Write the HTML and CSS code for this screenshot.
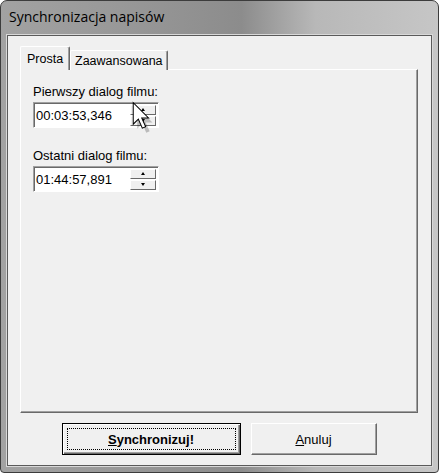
FILE: index.html
```html
<!DOCTYPE html>
<html lang="pl">
<head>
    <meta charset="UTF-8">
    <title>Synchronizacja napisów</title>
    <link rel="stylesheet" href="styles.css">
</head>
<body>
    <div class="window">
        <div class="titlebar">Synchronizacja napisów</div>
        <div class="client">
            <!-- Zakładki -->
            <div class="tabs">
                <div class="tab active">Prosta</div>
                <div class="tab">Zaawansowana</div>
            </div>
            <div class="panel">
                <label class="field-label">Pierwszy dialog filmu:</label>
                <div class="spin-field">
                    <span class="spin-value">00:03:53,346</span>
                    <div class="spin-buttons">
                        <div class="spin-btn"><span class="arrow-up"></span></div>
                        <div class="spin-btn"><span class="arrow-down"></span></div>
                    </div>
                </div>

                <label class="field-label second">Ostatni dialog filmu:</label>
                <div class="spin-field">
                    <span class="spin-value">01:44:57,891</span>
                    <div class="spin-buttons">
                        <div class="spin-btn"><span class="arrow-up"></span></div>
                        <div class="spin-btn"><span class="arrow-down"></span></div>
                    </div>
                </div>
            </div>
            <!-- Przyciski -->
            <div class="buttons">
                <button class="btn default"><span class="focus"><u>S</u>ynchronizuj!</span></button>
                <button class="btn cancel"><u>A</u>nuluj</button>
            </div>
        </div>
        <svg class="cursor" width="26" height="34" viewBox="0 0 22 30">
            <path d="M2.5 2.5 L2.5 21.5 L7 17 L10.5 25 L13.5 23.7 L10 16 L16 16 Z" fill="#000" opacity="0.22" transform="translate(2.5 3)"/>
            <path d="M1.5 1.5 L1.5 20.5 L6 16 L9.5 24 L12.5 22.7 L9 15 L15 15 Z" fill="#fff" stroke="#000" stroke-width="0.9"/>
        </svg>
    </div>
</body>
</html>
```

FILE: styles.css
```css
body {
    margin: 0;
    background: #fff;
    font-family: "Liberation Sans", Arial, sans-serif;
    font-size: 13px;
    color: #000;
}
.window {
    position: relative;
    width: 439px;
    height: 473px;
    box-sizing: border-box;
    border: 1px solid #3c3c3c;
    border-radius: 7px 7px 4px 4px;
    background: linear-gradient(to right, #a2a2a2, #979797 30%, #8c8c8c 55%, #b8b8b8 72%, #c6c6c6);
    display: flex;
    flex-direction: column;
    overflow: hidden;
}
.titlebar {
    height: 34px;
    box-sizing: border-box;
    padding: 6px 0 0 8px;
    font-family: "Open Sans", sans-serif;
    font-size: 14px;
    color: #000;
}
.client {
    flex: 1;
    margin: 0 6px 6px;
    border: 1px solid #5a5a5a;
    background: #f0f0f0;
    display: flex;
    flex-direction: column;
    padding: 10px 13px 10px 12px;
    box-shadow: 0 0 0 1px #d8d8d8;
}
.tabs {
    display: flex;
    align-items: flex-end;
    height: 24px;
    margin-bottom: -1px;
    position: relative;
    z-index: 1;
}
.tab {
    height: 20px;
    box-sizing: border-box;
    padding: 3px 4px 0;
    border-top: 1px solid #fff;
    border-left: 1px solid #fff;
    border-right: 1px solid #696969;
    box-shadow: inset -1px 0 0 #a0a0a0;
    background: #f0f0f0;
    border-radius: 2px 2px 0 0;
    font-size: 12.5px;
}
.tab.active {
    height: 24px;
    padding: 5px 6px 0 6px;
    width: 50px;
}
.panel {
    flex: 1;
    border-top: 1px solid #fff;
    border-left: 1px solid #fff;
    border-right: 1px solid #696969;
    border-bottom: 1px solid #696969;
    box-shadow: inset -1px -1px 0 #a0a0a0;
    padding: 14px 12px 0;
    display: flex;
    flex-direction: column;
    align-items: flex-start;
}
.field-label {
    height: 18px;
    line-height: 15px;
}
.field-label.second {
    margin-top: 20px;
}
.spin-field {
    width: 126px;
    height: 26px;
    box-sizing: border-box;
    background: #fff;
    border-top: 1px solid #a0a0a0;
    border-left: 1px solid #a0a0a0;
    border-right: 1px solid #fff;
    border-bottom: 1px solid #fff;
    box-shadow: inset 1px 1px 0 #696969;
    display: flex;
    align-items: center;
    padding: 2px;
}
.spin-value {
    flex: 1;
}
.spin-buttons {
    display: flex;
    flex-direction: column;
    gap: 1px;
    width: 26px;
    height: 21px;
}
.spin-btn {
    flex: 1;
    background: #f0f0f0;
    border-top: 1px solid #fff;
    border-left: 1px solid #fff;
    border-right: 1px solid #696969;
    border-bottom: 1px solid #696969;
    display: flex;
    align-items: center;
    justify-content: center;
}
.arrow-up, .arrow-down {
    width: 0;
    height: 0;
    border-left: 2.5px solid transparent;
    border-right: 2.5px solid transparent;
}
.arrow-up {
    border-bottom: 3px solid #000;
}
.arrow-down {
    border-top: 3px solid #000;
}
.buttons {
    display: flex;
    justify-content: center;
    gap: 10px;
    margin-top: 10px;
    height: 32px;
}
.btn {
    font-family: "Liberation Sans", Arial, sans-serif;
    font-size: 13px;
    color: #000;
    background: #f0f0f0;
    border-top: 1px solid #fff;
    border-left: 1px solid #fff;
    border-right: 1px solid #696969;
    border-bottom: 1px solid #696969;
    box-shadow: inset -1px -1px 0 #a0a0a0;
    padding: 0;
    margin: 0;
}
.btn.default {
    width: 179px;
    font-weight: bold;
    border: 1px solid #000;
    box-shadow: inset 1px 1px 0 #fff, inset -1px -1px 0 #696969, inset -2px -2px 0 #a0a0a0;
    padding: 4px;
}
.btn.default .focus {
    display: flex;
    align-items: center;
    justify-content: center;
    height: 100%;
    box-sizing: border-box;
    border: 1px dotted #000;
}
.btn.cancel {
    width: 126px;
}
.cursor {
    position: absolute;
    left: 130px;
    top: 100px;
}
```
